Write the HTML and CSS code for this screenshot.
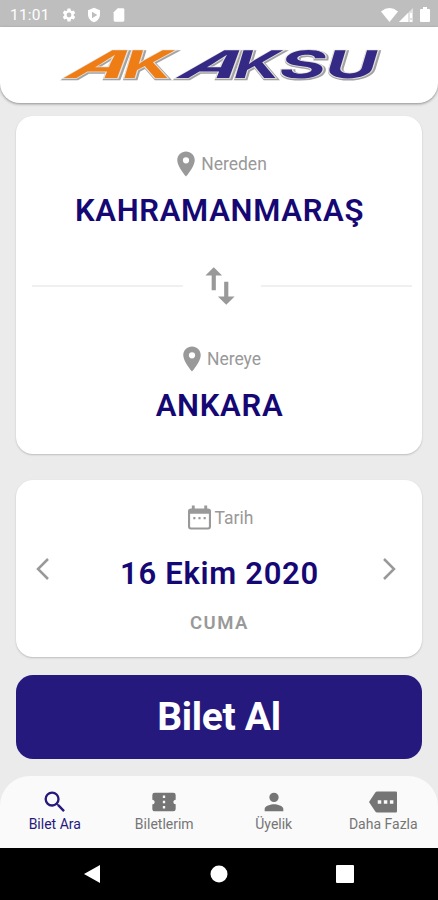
FILE: index.html
```
<!DOCTYPE html>
<html lang="tr">

<head>
    <meta charset="UTF-8">
    <meta name="viewport" content="width=device-width, initial-scale=1.0">
    <title>Ak Aksu</title>
    <link rel="stylesheet" href="styles.css">
</head>

<body>

    <div class="status-bar">
        <span class="clock">11:01</span>
        <svg class="status-gear" width="16" height="16" viewBox="0 0 24 24"><path d="M19.14 12.94c.04-.3.06-.61.06-.94s-.02-.64-.07-.94l2.03-1.58a.49.49 0 0 0 .12-.61l-1.92-3.32a.49.49 0 0 0-.59-.22l-2.39.96a7 7 0 0 0-1.62-.94L14.4 2.81a.48.48 0 0 0-.48-.41h-3.84a.48.48 0 0 0-.47.41l-.36 2.54c-.59.24-1.13.57-1.62.94l-2.39-.96a.48.48 0 0 0-.59.22L2.74 8.87a.48.48 0 0 0 .12.61l2.03 1.58c-.05.3-.09.63-.09.94s.02.64.07.94l-2.03 1.58a.49.49 0 0 0-.12.61l1.92 3.32c.12.22.37.29.59.22l2.39-.96c.5.38 1.03.7 1.62.94l.36 2.54c.05.24.24.41.48.41h3.84c.24 0 .44-.17.47-.41l.36-2.54a7 7 0 0 0 1.62-.94l2.39.96c.22.08.47 0 .59-.22l1.92-3.32a.48.48 0 0 0-.12-.61zM12 15.6a3.6 3.6 0 1 1 0-7.2 3.6 3.6 0 0 1 0 7.2z"/></svg>
        <svg class="status-shield" width="16" height="16" viewBox="0 0 24 24"><path fill-rule="evenodd" d="M12 1 3 5v6c0 5.600 3.800 10.700 9 12 5.200-1.300 9-6.400 9-12V5zM9 7l8 5-8 5z"/></svg>
        <svg class="status-card" width="16" height="16" viewBox="0 0 24 24"><path d="M18 2h-8L4 8v12c0 1.100.9 2 2 2h12c1.100 0 2-.9 2-2V4c0-1.100-.9-2-2-2z"/></svg>
        <svg class="status-wifi" width="17" height="14" viewBox="0 0 17 14"><path d="M8.500 14 0 3.500Q8.500-3.300 17 3.500z"/></svg>
        <svg class="status-signal" width="14" height="14" viewBox="0 0 14 14"><path d="M14 0v14H0z" opacity=".55"/><path d="M9 5v9H0zM11 5h2v5h-2zM11 12h2v2h-2z"/></svg>
        <svg class="status-battery" width="10" height="15" viewBox="0 0 10 15"><path d="M3 0h4v2h2q1 0 1 1v11q0 1-1 1H1q-1 0-1-1V3q0-1 1-1h2z"/></svg>
    </div>

    <header class="header">
        <svg class="logo" width="330" height="44" viewBox="0 0 330 44">
            <defs>
                <!-- every letter has its own slant and width -->
                <g id="logo-ak">
                    <text transform="matrix(1 0 -1.070 1 8 35)" textLength="57" lengthAdjust="spacingAndGlyphs">A</text>
                    <text transform="matrix(1 0 -.3 1 66 35)" textLength="49" lengthAdjust="spacingAndGlyphs">K</text>
                </g>
                <g id="logo-aksu">
                    <text transform="matrix(1 0 -1.070 1 120 35)" textLength="57" lengthAdjust="spacingAndGlyphs">A</text>
                    <text transform="matrix(1 0 -.3 1 177 35)" textLength="46" lengthAdjust="spacingAndGlyphs">K</text>
                    <text transform="matrix(1 0 -.3 1 222 35)" textLength="47" lengthAdjust="spacingAndGlyphs">S</text>
                    <text transform="matrix(1 0 -.3 1 268 35)" textLength="52" lengthAdjust="spacingAndGlyphs">U</text>
                </g>
            </defs>
            <g class="logo-shadow" transform="translate(1 .7)">
                <use href="#logo-ak"/>
                <use href="#logo-aksu"/>
            </g>
            <g class="logo-edge">
                <use href="#logo-ak"/>
                <use href="#logo-aksu"/>
            </g>
            <use class="logo-orange" href="#logo-ak"/>
            <use class="logo-navy" href="#logo-aksu"/>
        </svg>
    </header>

    <main class="content">
        <section class="card route">
            <div class="label">
                <svg width="30" height="30" viewBox="0 0 24 24"><path d="M12 2C8.130 2 5 5.130 5 9c0 5.250 7 13 7 13s7-7.750 7-13c0-3.870-3.130-7-7-7zm0 9.500a2.500 2.500 0 1 1 0-5 2.500 2.500 0 0 1 0 5z"/></svg>
                <span>Nereden</span>
            </div>
            <div class="value">KAHRAMANMARAŞ</div>
            <div class="swap">
                <svg width="50" height="50" viewBox="0 0 24 24"><path d="M16 17.010V10h-2v7.010h-3L15 21l4-3.990zM9 3 5 6.990h3V14h2V6.990h3z"/></svg>
            </div>
            <div class="label">
                <svg width="30" height="30" viewBox="0 0 24 24"><path d="M12 2C8.130 2 5 5.130 5 9c0 5.250 7 13 7 13s7-7.750 7-13c0-3.870-3.130-7-7-7zm0 9.500a2.500 2.500 0 1 1 0-5 2.500 2.500 0 0 1 0 5z"/></svg>
                <span>Nereye</span>
            </div>
            <div class="value">ANKARA</div>
        </section>

        <section class="card date">
            <svg class="arrow" width="14" height="24" viewBox="0 0 14 24"><path d="M12 2 2 12l10 10"/></svg>
            <div class="date-info">
                <div class="label label-date">
                    <svg width="23" height="26" viewBox="0 0 24 26"><path fill-rule="evenodd" d="M4 0h3v3h10V0h3v3h1q3 0 3 3v16q0 3-3 3H3q-3 0-3-3V6q0-3 3-3h1zM2.200 8.500v13.500q0 1 1 1h17.600q1 0 1-1V8.500zM5.500 12h2.200v2.200H5.500zM10.900 12h2.200v2.200h-2.200zM16.300 12h2.200v2.200h-2.200z"/></svg>
                    <span>Tarih</span>
                </div>
                <div class="value">16 Ekim 2020</div>
                <div class="day">CUMA</div>
            </div>
            <svg class="arrow" width="14" height="24" viewBox="0 0 14 24"><path d="m2 2 10 10L2 22"/></svg>
        </section>

        <button type="button" class="buy">Bilet Al</button>
    </main>

    <nav class="tabs">
        <a class="tab active">
            <svg width="28" height="28" viewBox="0 0 24 24"><path d="M15.500 14h-.79l-.28-.27A6.470 6.470 0 0 0 16 9.500 6.500 6.500 0 1 0 9.500 16c1.610 0 3.090-.59 4.230-1.570l.27.28v.79l5 4.990L20.490 19zm-6 0a4.500 4.500 0 1 1 0-9 4.500 4.500 0 0 1 0 9z"/></svg>
            <span>Bilet Ara</span>
        </a>
        <a class="tab">
            <svg width="28" height="28" viewBox="0 0 24 24"><path d="M20 12c0-1.100.9-2 2-2V6a2 2 0 0 0-2-2H4a2 2 0 0 0-1.990 2v4c1.100 0 1.990.9 1.990 2s-.89 2-2 2v4c0 1.100.9 2 2 2h16a2 2 0 0 0 2-2v-4a2 2 0 0 1-2-2zm-7 5.500h-2v-2h2zm0-4.500h-2v-2h2zm0-4.500h-2v-2h2z"/></svg>
            <span>Biletlerim</span>
        </a>
        <a class="tab">
            <svg width="28" height="28" viewBox="0 0 24 24"><path d="M12 12a4 4 0 1 0 0-8 4 4 0 0 0 0 8zm0 2c-2.670 0-8 1.340-8 4v2h16v-2c0-2.660-5.330-4-8-4z"/></svg>
            <span>Üyelik</span>
        </a>
        <a class="tab">
            <svg width="28" height="28" viewBox="0 0 24 24"><path fill-rule="evenodd" d="M23 3H7c-.69 0-1.230.35-1.590.88L0 12l5.410 8.110c.36.53.9.89 1.590.89h16q1 0 1-1V4q0-1-1-1zM7.500 10.500h3v3h-3zM12.700 10.500h3v3h-3zM17.900 10.500h3v3h-3z"/></svg>
            <span>Daha Fazla</span>
        </a>
    </nav>

    <div class="android-nav">
        <svg width="18" height="20" viewBox="0 0 18 20"><path d="M17 1v18L1 10z"/></svg>
        <svg width="18" height="20" viewBox="0 0 18 20"><circle cx="9" cy="10" r="8.500"/></svg>
        <svg width="18" height="20" viewBox="0 0 18 20"><rect y="1" width="18" height="18" rx="1"/></svg>
    </div>

</body>

</html>
```
FILE: styles.css
```
* {
    box-sizing: border-box;
}

body {
    margin: 0;
    height: 900px;
    display: flex;
    flex-direction: column;
    overflow: hidden;
    background-color: #ebebeb;
    font-family: Roboto, sans-serif;
}

svg {
    display: block;
    flex: none;
    fill: currentColor;
}

.status-bar {
    display: flex;
    align-items: center;
    height: 27px;
    padding: 2px 8px 0 10px;
    background-color: #bebebe;
    color: #fff;
}

.clock {
    width: 51px;
    font-size: 15.5px;
    letter-spacing: 0.2px;
}

.status-shield {
    margin-left: 9px;
}

.status-card {
    margin-left: 9px;
}

.status-wifi {
    margin-left: auto;
}

.status-signal {
    margin-left: 1px;
}

.status-battery {
    margin-left: 7px;
}

.header {
    display: flex;
    justify-content: center;
    height: 76px;
    padding-top: 16px;
    background-color: #fff;
    border-radius: 0 0 20px 20px;
    box-shadow: 0 1px 3px rgba(0, 0, 0, 0.4);
}

.logo {
    overflow: visible;
    font-family: Inter, sans-serif;
    font-size: 38px;
    font-weight: 700;
}

.logo-shadow {
    fill: #a3a3a3;
    stroke: #a3a3a3;
    stroke-width: 2.4px;
}

.logo-edge {
    fill: #e6e1dc;
    stroke: #e6e1dc;
    stroke-width: 1.4px;
}

.logo-orange {
    fill: #ee7d16;
}

.logo-navy {
    fill: #352986;
}

.content {
    padding: 13px 16px 0;
}

.card {
    background-color: #fff;
    border-radius: 17px;
    box-shadow: 0 1px 2px rgba(0, 0, 0, 0.2);
}

.route {
    height: 338px;
    padding-top: 33px;
}

.label {
    display: flex;
    align-items: center;
    justify-content: center;
    height: 30px;
    color: #999;
    font-size: 17.5px;
}

.value {
    height: 36px;
    margin-top: 13px;
    padding-left: 1px;
    color: #160874;
    font-size: 31px;
    font-weight: 600;
    line-height: 37px;
    letter-spacing: 0.7px;
    text-align: center;
}

.swap {
    display: flex;
    align-items: center;
    gap: 14px;
    height: 44px;
    margin: 36px 10px 36px 16px;
    color: #999;
}

.swap svg {
    margin-left: -2px;
    margin-right: 2px;
}

.swap::before,
.swap::after {
    content: "";
    flex: 1;
    height: 2px;
    background-color: #f0f0f0;
}

.date {
    display: flex;
    justify-content: space-between;
    height: 177px;
    margin-top: 26px;
    padding: 23px 26px 0 20px;
}

.date-info {
    padding-left: 7px;
}

.date-info .value {
    margin-top: 22px;
    padding-left: 0;
    line-height: 38px;
}

.label-date {
    gap: 4px;
    padding-left: 2px;
}

.arrow {
    margin-top: 54px;
    fill: none;
    stroke: #999;
    stroke-width: 2.5px;
}

.day {
    margin-top: 21px;
    color: #999;
    font-size: 18.5px;
    font-weight: 600;
    letter-spacing: 1.5px;
    text-align: center;
}

.buy {
    display: block;
    width: 100%;
    height: 84px;
    margin-top: 18px;
    border: none;
    border-radius: 17px;
    background-color: #26197d;
    color: #fff;
    font-family: inherit;
    font-size: 39px;
    font-weight: 700;
    letter-spacing: -0.3px;
}

.tabs {
    display: grid;
    grid-template-columns: repeat(4, 1fr);
    height: 72px;
    margin-top: auto;
    padding-top: 12px;
    background-color: #fafafa;
    border-radius: 30px 30px 0 0;
}

.tab {
    display: flex;
    flex-direction: column;
    align-items: center;
    color: #757575;
    font-size: 14px;
    line-height: 17px;
}

.tab.active {
    color: #26197d;
}

.android-nav {
    display: flex;
    justify-content: space-between;
    align-items: center;
    height: 52px;
    padding: 0 84px 0 83px;
    background-color: #000;
    color: #fff;
}
```
